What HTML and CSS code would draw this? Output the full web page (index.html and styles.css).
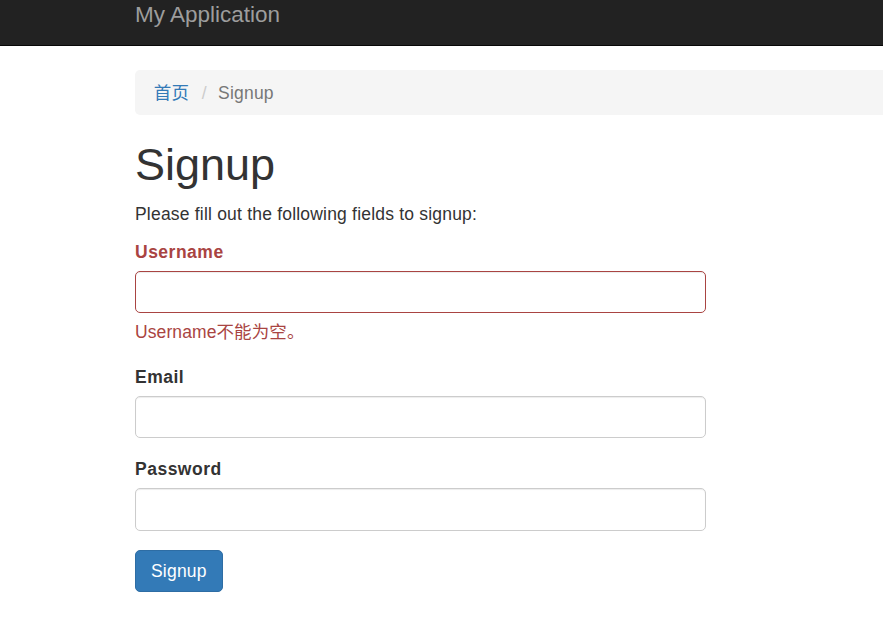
FILE: index.html
```html
<!DOCTYPE html>
<html lang="zh-CN">
<head>
<meta charset="utf-8">
<title>Signup</title>
<link rel="stylesheet" href="styles.css">
</head>
<body>
<nav class="navbar">
  <div class="navbar-inner">
    <a class="navbar-brand" href="#">My Application</a>
  </div>
</nav>
<div class="container">
  <ul class="breadcrumb">
    <li><a href="#">首页</a></li>
    <li class="active">Signup</li>
  </ul>
  <div class="site-signup">
    <h1>Signup</h1>
    <p class="intro">Please fill out the following fields to signup:</p>
    <form class="signup-form">
      <div class="form-group has-error">
        <label class="control-label" for="username">Username</label>
        <input type="text" id="username" class="form-control">
        <div class="help-block">Username不能为空。</div>
      </div>
      <div class="form-group">
        <label class="control-label" for="email">Email</label>
        <input type="text" id="email" class="form-control">
        <div class="help-block"></div>
      </div>
      <div class="form-group">
        <label class="control-label" for="password">Password</label>
        <input type="password" id="password" class="form-control">
        <div class="help-block"></div>
      </div>
      <div class="form-group form-actions">
        <button type="button" class="btn btn-primary">Signup</button>
      </div>
    </form>
  </div>
</div>
</body>
</html>
```

FILE: styles.css
```css
html {
  overflow-x: hidden;
}

body {
  margin: 0;
  background: #fff;
  color: #333;
  font-family: "Liberation Sans", Arial, "Noto Sans CJK SC", sans-serif;
  font-size: 17.5px;
  line-height: 25px;
}

a {
  color: #337ab7;
  text-decoration: none;
}

.navbar {
  background: #222;
  border-bottom: 1px solid #080808;
  height: 45px;
}

.navbar-inner {
  padding-left: 135px;
}

.navbar-brand {
  display: inline-block;
  padding-top: 2px;
  color: #9d9d9d;
  font-size: 22.5px;
  line-height: 25px;
}

.container {
  padding-left: 135px;
  padding-top: 24px;
}

.breadcrumb {
  list-style: none;
  margin: 0 -12px 25px 0;
  padding: 11px 18.75px 9px;
  background: #f5f5f5;
  border-radius: 5px;
  height: 25px;
  letter-spacing: 0.2px;
}

.breadcrumb li {
  display: inline-block;
}

.breadcrumb li + li::before {
  content: "/\00a0";
  padding: 0 6.25px 0 7.5px;
  color: #ccc;
}

.breadcrumb .active {
  color: #777;
}

.site-signup h1 {
  margin: 25px 0 12.5px;
  font-size: 45px;
  font-weight: 500;
  line-height: 49.5px;
}

.intro {
  margin: 0 0 12.5px;
  letter-spacing: 0.2px;
}

.signup-form {
  width: 571px;
}

.form-group {
  margin-bottom: 18.75px;
}

.form-group.has-error {
  margin-bottom: 19.75px;
}

.form-actions {
  padding-top: 1px;
}

.control-label {
  display: inline-block;
  margin-bottom: 6px;
  font-weight: bold;
  letter-spacing: 0.5px;
}

.form-control {
  display: block;
  box-sizing: border-box;
  width: 100%;
  height: 42.5px;
  padding: 7.5px 15px;
  font: inherit;
  color: #555;
  background: #fff;
  border: 1px solid #ccc;
  border-radius: 5px;
  box-shadow: inset 0 1px 1px rgba(0, 0, 0, 0.075);
  outline: none;
}

.help-block {
  margin-top: 7px;
  margin-bottom: 12.5px;
  color: #737373;
  letter-spacing: 0.1px;
}

.has-error .control-label,
.has-error .help-block {
  color: #a94442;
}

.has-error .form-control {
  border-color: #a94442;
}

.btn {
  display: inline-block;
  box-sizing: border-box;
  height: 41.5px;
  padding: 7.5px 15px;
  font: inherit;
  line-height: 25px;
  letter-spacing: 0.2px;
  border: 1px solid transparent;
  border-radius: 5px;
  cursor: pointer;
}

.btn-primary {
  color: #fff;
  background: #337ab7;
  border-color: #2e6da4;
}
```
